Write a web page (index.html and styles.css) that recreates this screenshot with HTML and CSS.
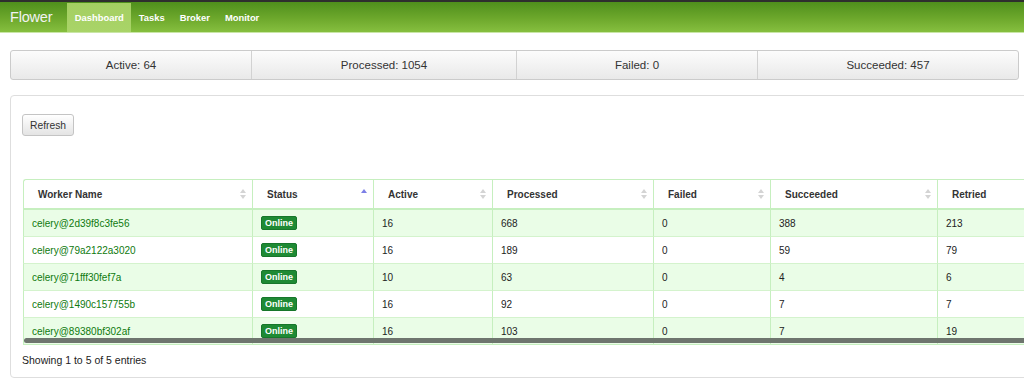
FILE: index.html
```html
<!DOCTYPE html>
<html lang="en">
<head>
    <meta charset="UTF-8">
    <meta name="viewport" content="width=device-width, initial-scale=1.0">
    <title>Flower</title>
    <link rel="stylesheet" href="styles.css">
</head>
<body>
    <div class="navbar">
        <span class="brand">Flower</span>
        <ul class="nav">
            <li class="active"><a href="/">Dashboard</a></li>
            <li><a href="/tasks">Tasks</a></li>
            <li><a href="/broker">Broker</a></li>
            <li><a href="/monitor">Monitor</a></li>
        </ul>
    </div>

    <div class="container">
        <div class="stats">
            <div class="stat">Active: 64</div>
            <div class="stat">Processed: 1054</div>
            <div class="stat">Failed: 0</div>
            <div class="stat">Succeeded: 457</div>
        </div>

        <div class="panel">
            <button class="btn">Refresh</button>

            <div class="table-wrap">
                <table class="workers">
                    <colgroup>
                        <col style="width: 229px">
                        <col style="width: 121px">
                        <col style="width: 119px">
                        <col style="width: 161px">
                        <col style="width: 117px">
                        <col style="width: 167px">
                        <col style="width: 130px">
                    </colgroup>
                    <thead>
                        <tr>
                            <th><div class="th">Worker Name <svg class="sort" width="6" height="10"><path d="M3 0L6 4H0z" fill="#d4d4d4"/><path d="M3 10L0 6H6z" fill="#d4d4d4"/></svg></div></th>
                            <th><div class="th">Status <svg class="sort" width="6" height="10"><path d="M3 0L6 4H0z" fill="#7c7fe6"/></svg></div></th>
                            <th><div class="th">Active <svg class="sort" width="6" height="10"><path d="M3 0L6 4H0z" fill="#d4d4d4"/><path d="M3 10L0 6H6z" fill="#d4d4d4"/></svg></div></th>
                            <th><div class="th">Processed <svg class="sort" width="6" height="10"><path d="M3 0L6 4H0z" fill="#d4d4d4"/><path d="M3 10L0 6H6z" fill="#d4d4d4"/></svg></div></th>
                            <th><div class="th">Failed <svg class="sort" width="6" height="10"><path d="M3 0L6 4H0z" fill="#d4d4d4"/><path d="M3 10L0 6H6z" fill="#d4d4d4"/></svg></div></th>
                            <th><div class="th">Succeeded <svg class="sort" width="6" height="10"><path d="M3 0L6 4H0z" fill="#d4d4d4"/><path d="M3 10L0 6H6z" fill="#d4d4d4"/></svg></div></th>
                            <th><div class="th">Retried</div></th>
                        </tr>
                    </thead>
                    <tbody>
                        <tr class="odd">
                            <td><a href="#">celery@2d39f8c3fe56</a></td>
                            <td><span class="badge">Online</span></td>
                            <td>16</td><td>668</td><td>0</td><td>388</td><td>213</td>
                        </tr>
                        <tr>
                            <td><a href="#">celery@79a2122a3020</a></td>
                            <td><span class="badge">Online</span></td>
                            <td>16</td><td>189</td><td>0</td><td>59</td><td>79</td>
                        </tr>
                        <tr class="odd">
                            <td><a href="#">celery@71fff30fef7a</a></td>
                            <td><span class="badge">Online</span></td>
                            <td>10</td><td>63</td><td>0</td><td>4</td><td>6</td>
                        </tr>
                        <tr>
                            <td><a href="#">celery@1490c157755b</a></td>
                            <td><span class="badge">Online</span></td>
                            <td>16</td><td>92</td><td>0</td><td>7</td><td>7</td>
                        </tr>
                        <tr class="odd">
                            <td><a href="#">celery@89380bf302af</a></td>
                            <td><span class="badge">Online</span></td>
                            <td>16</td><td>103</td><td>0</td><td>7</td><td>19</td>
                        </tr>
                    </tbody>
                </table>
                <div class="scrollbar"></div>
            </div>

            <div class="info">Showing 1 to 5 of 5 entries</div>
        </div>
    </div>
</body>
</html>
```

FILE: styles.css
```css
html {
    overflow-x: hidden;
}

body {
    margin: 0;
    padding: 0;
    font-family: 'Liberation Sans', Arial, sans-serif;
    color: #333;
    background: #fff;
}

a {
    color: #0e7a0e;
    text-decoration: none;
}

.navbar {
    height: 30px;
    border-top: 2px solid #2e2e2e;
    border-bottom: 1px solid #c9e6a6;
    background: linear-gradient(to bottom, #4f8f1c, #6da82c 55%, #86bf3f);
    display: flex;
    align-items: stretch;
}

.brand {
    color: #f2f2f2;
    font-size: 14.5px;
    line-height: 30px;
    padding: 0 15px 0 10px;
    letter-spacing: -0.2px;
}

.nav {
    list-style: none;
    display: flex;
    margin: 0;
    padding: 0;
}

.nav li a {
    display: block;
    padding: 0 7.5px;
    line-height: 29px;
    margin-top: 1px;
    color: #fff;
    font-size: 9.4px;
    font-weight: bold;
}

.nav li.active a {
    background: linear-gradient(to bottom, #a4cf62, #a9d468);
}

.container {
    padding: 17px 0 0 10px;
    overflow: hidden;
}

.stats {
    width: 1007px;
    display: grid;
    grid-template-columns: 240px 265px 241px 1fr;
    border: 1px solid #cbcbcb;
    border-radius: 3px;
    background: linear-gradient(to bottom, #fcfcfc, #e9e9e9);
}

.stat {
    height: 28px;
    line-height: 28px;
    text-align: center;
    font-size: 11.5px;
    color: #333;
    border-left: 1px solid #d2d2d2;
}

.stat:first-child {
    border-left: none;
}

.panel {
    margin-top: 15px;
    width: 1080px;
    padding: 18px 11px 0 11px;
    height: 263px;
    border: 1px solid #dedede;
    border-radius: 4px;
}

.btn {
    display: block;
    height: 22px;
    padding: 0 7px;
    font-family: 'Liberation Sans', Arial, sans-serif;
    font-size: 10.3px;
    color: #333;
    border: 1px solid #c4c4c4;
    border-radius: 3px;
    background: linear-gradient(to bottom, #ffffff, #e4e4e4);
}

.table-wrap {
    position: relative;
    margin-top: 43px;
    margin-left: 1px;
}

.workers {
    border-collapse: separate;
    border-spacing: 0;
    table-layout: fixed;
    width: 1044px;
    font-size: 10px;
}

.workers th {
    height: 28px;
    text-align: left;
    font-weight: bold;
    padding: 0 6px 0 14px;
    border-top: 1px solid #c6efbf;
    border-left: 1px solid #c6efbf;
    border-bottom: 2px solid #c6efbf;
    background: #fff;
}

.workers th:first-child {
    border-top-left-radius: 3px;
}

.th {
    display: flex;
    justify-content: space-between;
    align-items: center;
}

.workers td {
    height: 26px;
    padding: 0 8px;
    border-left: 1px solid #c6efbf;
    border-bottom: 1px solid #d4f3cd;
    color: #222;
}

.workers tr.odd td {
    background: #eafde7;
}

.workers tbody tr:last-child td {
    border-bottom: 1px solid #c6efbf;
}

.badge {
    display: inline-block;
    background: #1e8a34;
    color: #fff;
    font-size: 9px;
    font-weight: bold;
    padding: 1px 3px;
    line-height: 10px;
    border-radius: 2px;
    border: 1px solid #17762b;
}

.scrollbar {
    position: absolute;
    left: 1px;
    right: 0;
    bottom: 2px;
    height: 5px;
    background: #6e756e;
    border-radius: 3px 0 0 3px;
}

.info {
    margin-top: 9px;
    font-size: 10.5px;
    color: #222;
}
```
